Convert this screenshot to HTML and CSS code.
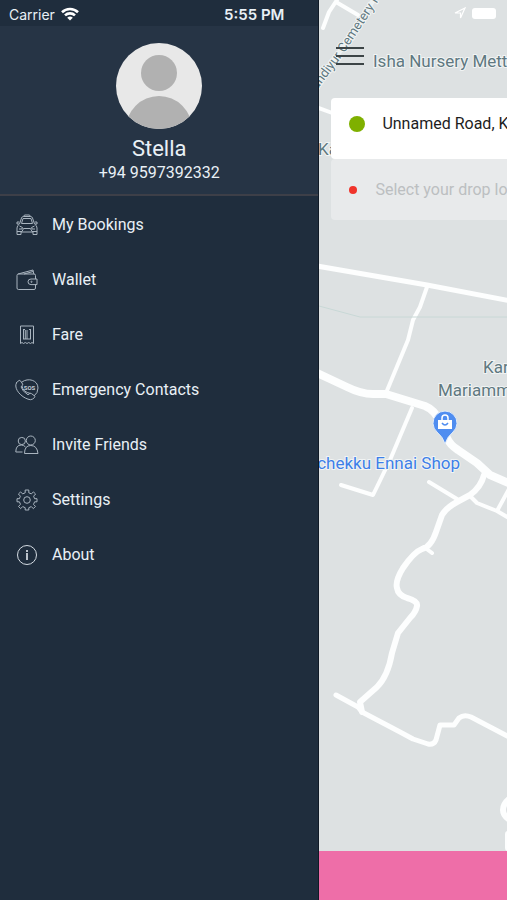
FILE: index.html
```
<!DOCTYPE html>
<html lang="en">

<head>
    <meta charset="UTF-8">
    <meta name="viewport" content="width=device-width, initial-scale=1.0">
    <title>Menu</title>
    <link rel="stylesheet" href="styles.css">
</head>

<body>
    <aside class="sidebar">
        <div class="status-bar">
            <div class="carrier">
                <span>Carrier</span>
                <svg width="18" height="14" viewBox="0 0 18 14" fill="none" stroke="#fff" stroke-width="2.6">
                    <path d="M1 5.2a11.5 11.5 0 0 1 16 0M4 8.4a7.2 7.2 0 0 1 10 0" />
                    <path d="M9 13.6L6.2 10.8a4 4 0 0 1 5.6 0z" fill="#fff" stroke="none" />
                </svg>
            </div>
            <span class="time">5:55 PM</span>
        </div>
        <div class="profile">
            <svg class="avatar" viewBox="0 0 86 86">
                <clipPath id="avatarClip"><circle cx="43" cy="43" r="43" /></clipPath>
                <g clip-path="url(#avatarClip)">
                    <rect width="86" height="86" fill="#e8e8e8" />
                    <circle cx="43" cy="30" r="18" fill="#b1b1b1" />
                    <circle cx="43" cy="86" r="33" fill="#b1b1b1" />
                </g>
            </svg>
            <div class="name">Stella</div>
            <div class="phone">+94 9597392332</div>
        </div>
        <nav class="menu">
            <a class="menu-item" href="#bookings">
                <svg class="menu-icon" viewBox="0 0 24 24">
                    <path d="M8.500 3.500L9.500 2h5l1 1.500M4.500 11L6.500 5q.5-1.500 2-1.500h7q1.500 0 2 1.500l2 6M6.500 10.500L8 5.500h8l1.500 5zM4.300 9H2v2h2M19.700 9H22v2h-2M4.500 11Q2 12.500 2 15v6.500h4V19h12v2.500h4V15q0-2.500-2.500-4M2 18.500h5l1.500-3h7l1.500 3h5M4.500 13l3 1.500-.5 1.500H4M19.500 13l-3 1.500.5 1.500h3" />
                </svg>
                <span>My Bookings</span>
            </a>
            <a class="menu-item" href="#wallet">
                <svg class="menu-icon" viewBox="0 0 24 24">
                    <path d="M20.500 11V7.500q0-1.500-1.500-1.500H3.500Q2 6 2 7.500V20q0 1.500 1.500 1.500H19q1.500 0 1.500-1.500v-3.500M3 6l15-4 .8 4M9 6l9-2.500M22 11h-6q-3 0-3 2.800t3 2.800h6z" />
                    <circle cx="16.500" cy="13.800" r=".6" />
                </svg>
                <span>Wallet</span>
            </a>
            <a class="menu-item" href="#fare">
                <svg class="menu-icon" viewBox="0 0 24 24">
                    <path d="M5.500 3h13v17.500l-1.500-1-1.500 1-1.800-1-1.700 1-1.700-1-1.800 1-1.500-1-1.500 1z" />
                    <path d="M8.500 6v10M10.300 7v9M12 7v9M15.500 6v10M8 6.500h2M14 6.500h2M8 16h8" />
                </svg>
                <span>Fare</span>
            </a>
            <a class="menu-item" href="#emergency">
                <svg class="menu-icon" viewBox="0 0 24 24">
                    <path d="M7 4C13-.5 23 2 23 10q0 5-4 8M1 5l3-2.500q1-.5 1.600.5l2 3q.5 1-.4 1.700L6 8.800q1 4.200 7 8l1.800-1.300q1-.6 1.800.2l2.700 2q1 .8.2 1.800-1.700 2-4 2.200C9 21 1 14 .8 8q0-2 .7-3M7 8q1 6 8.500 7.500" />
                    <text x="14.500" y="11.800" class="sos">SOS</text>
                </svg>
                <span>Emergency Contacts</span>
            </a>
            <a class="menu-item" href="#invite">
                <svg class="menu-icon" viewBox="0 0 24 24">
                    <circle cx="6.800" cy="8" r="3.600" />
                    <circle cx="15.800" cy="7.500" r="4.500" />
                    <path d="M9.500 20.500q0-8 6.300-8t7.200 8zM7.500 19H.8q0-7 5.500-7 2.500 0 4.200 2" />
                </svg>
                <span>Invite Friends</span>
            </a>
            <a class="menu-item" href="#settings">
                <svg class="menu-icon" viewBox="0 0 24 24">
                    <path d="M10.200 2h3.600v2.800l2.600 1.100 2-2L20.600 6l-2 2.200 1 2.500H22v3.100h-2.400l-1.100 2.600 2 2-2.200 2.200-2-2-2.500 1.100V22h-3.600v-2.300l-2.500-1.100-2 2-2.200-2.200 2-2-1.100-2.600H2v-3.100h2.400l1-2.500-2-2.200 2.200-2.100 2 2 2.600-1.100z" />
                    <circle cx="12" cy="12" r="3.300" />
                </svg>
                <span>Settings</span>
            </a>
            <a class="menu-item" href="#about">
                <svg class="menu-icon about-icon" viewBox="0 0 24 24">
                    <circle cx="12" cy="12" r="9.500" />
                    <path d="M12 10v7M12 7v2" stroke-width="1.700" />
                </svg>
                <span>About</span>
            </a>
        </nav>
    </aside>

    <main class="home">
        <div class="map-area">
            <svg class="map">
                <!-- small roads -->
                <g class="road" stroke-width="4">
                    <path d="M4 28L10 12 18 0M17 2L39 15M0 108L16 114" />
                    <path d="M108 287L101 307 94 320 89 340 67 393" />
                    <path d="M93 408L71 460 54 495 22 485" />
                    <path d="M110 482L138 499M151 496L158 503 178 511 190 518M190 489L178 511M105 547L113 553" />
                </g>
                <path d="M0 306L41 317H400" stroke="#c8d8d6" fill="none" />
                <!-- wider roads -->
                <g class="road" stroke-width="6">
                    <path d="M-2 266L108 285 192 301" stroke-width="5" />
                    <path d="M165 475Q162 487 151 495L138 502Q127 508 123 515L117 532Q112 547 103 549 95 552 84 568 76 581 78 588 79 595 88 598 99 601 98 606 97 612 91 618L79 633 73 653Q69 676 58 687L41 702 43 712" />
                    <path d="M17 695L39 707 43 712 81 732 94 739 109 744Q115 745 117 740L121 725H135L140 718Q145 714 152 717L192 738" stroke-width="5" />
                    <path d="M190 799Q184 804 184 810T191 820M189 834V848" />
                </g>
                <path class="road" stroke-width="8" d="M-4 372L28 387Q42 394 54 394H67L106 406Q116 410 121 422L128 438Q131 445 139 450L158 463 171 475 192 484" />
                <path d="M-10 93L17 57 61-10" fill="none" stroke="#edf1f1" stroke-width="5" />
                <path id="cemeteryRoad" d="M-2 90L22 58 68-12" fill="none" />

                <text class="street"><textPath href="#cemeteryRoad">andiyur Cemetery R</textPath></text>
                <text class="place" x="54" y="67">Isha Nursery Mett</text>
                <text class="place" x="-1" y="155">Ka</text>
                <text class="place" x="164" y="373">Kar</text>
                <text class="place" x="119" y="396">Mariamm</text>
                <text class="place shop" x="141" y="469" text-anchor="end">chekku Ennai Shop</text>

                <path d="M126 444Q124 437 118 432A12 12 0 1 1 134 432Q128 437 126 444z" fill="#4f8df0" stroke="#dfeaf8" />
                <path d="M119 420h14v9h-14z" fill="#fff" />
                <path d="M123 420v-2a3 3 0 0 1 6 0v2" fill="none" stroke="#fff" stroke-width="1.500" />
                <path d="M123 423q3 4 6 0" fill="none" stroke="#4f8df0" stroke-width="1.500" />
            </svg>

            <div class="overlay">
                <div class="map-status">
                    <svg width="12" height="12" viewBox="0 0 12 12" fill="none" stroke="#fff" stroke-width="1.200">
                        <path d="M1 6L11 1 6.500 11V6z" />
                    </svg>
                    <span class="battery"></span>
                </div>
                <button class="menu-button" aria-label="Menu">
                    <span></span>
                    <span></span>
                    <span></span>
                </button>
                <form class="locations">
                    <div class="location pickup">
                        <span class="dot"></span>
                        <input type="text" value="Unnamed Road, K" aria-label="Pickup location">
                    </div>
                    <div class="location drop">
                        <span class="dot"></span>
                        <input type="text" placeholder="Select your drop lo" aria-label="Drop location">
                    </div>
                </form>
            </div>
        </div>
        <button class="book-button" aria-label="Book"></button>
    </main>
</body>

</html>
```
FILE: styles.css
```
* {
    box-sizing: border-box;
}

body {
    margin: 0;
    min-height: 100vh;
    display: flex;
    font-family: Roboto, "Liberation Sans", sans-serif;
    background-color: #dde1e2;
}

.sidebar {
    width: 63%;
    flex-shrink: 0;
    background-color: #1f2d3d;
    border-right: 1px solid #101a26;
    color: #e9f0f6;
}

.status-bar {
    height: 26px;
    display: flex;
    justify-content: space-between;
    align-items: center;
    padding: 2px 34px 0 9px;
    font-family: Inter, "Liberation Sans", sans-serif;
    font-size: 14px;
}

.carrier {
    display: flex;
    align-items: center;
    gap: 6px;
}

.time {
    font-size: 15px;
    font-weight: 600;
}

.profile {
    display: flex;
    flex-direction: column;
    align-items: center;
    padding: 17px 0 11px;
    background-color: #263445;
    border-bottom: 2px solid #3d3f48;
}

.avatar {
    width: 86px;
    height: 86px;
}

.name {
    margin-top: 6px;
    font-size: 22px;
    line-height: 28px;
}

.phone {
    font-size: 16px;
    line-height: 20px;
}

.menu {
    display: flex;
    flex-direction: column;
    padding-top: 1px;
}

.menu-item {
    height: 55px;
    display: flex;
    align-items: center;
    gap: 13px;
    padding-left: 15px;
    font-size: 16px;
    color: #e9f0f6;
    text-decoration: none;
}

.menu-icon {
    width: 24px;
    height: 24px;
    fill: none;
    stroke: #a9b4bf;
    stroke-width: 1;
    stroke-linejoin: round;
}

.about-icon {
    stroke: #d5dce3;
}

.sos {
    font-size: 6px;
    font-weight: bold;
    text-anchor: middle;
    fill: #c5ced6;
    stroke: none;
}

.home {
    flex: 1;
    min-width: 0;
    display: flex;
    flex-direction: column;
}

.map-area {
    position: relative;
    flex: 1;
    overflow: hidden;
}

.map {
    position: absolute;
    top: 0;
    left: 0;
    width: 100%;
    height: 100%;
}

.road {
    fill: none;
    stroke: #fdfefe;
    stroke-linecap: round;
    stroke-linejoin: round;
}

.place,
.street {
    font-size: 17px;
    fill: #5f7880;
    stroke: #f1f4f4;
    stroke-width: 2px;
    paint-order: stroke;
}

.street {
    font-size: 13px;
}

.shop {
    fill: #3d7fe8;
}

.overlay {
    position: relative;
}

.map-status {
    height: 26px;
    display: flex;
    justify-content: flex-end;
    align-items: center;
    gap: 6px;
    padding-right: 11px;
}

.battery {
    width: 24px;
    height: 11px;
    background-color: white;
    border-radius: 3px;
}

.menu-button {
    display: flex;
    flex-direction: column;
    gap: 6px;
    width: 40px;
    margin: 14px 0 0 11px;
    padding: 7px 6px;
    background: none;
    border: none;
    cursor: pointer;
}

.menu-button span {
    width: 100%;
    height: 2px;
    background-color: #3c4446;
}

.locations {
    margin: 26px 0 0 12px;
}

.location {
    height: 61px;
    display: flex;
    align-items: center;
    padding-left: 18px;
    border-radius: 4px 0 0 4px;
}

.pickup {
    gap: 17px;
    padding-bottom: 10px;
    background-color: white;
}

.drop {
    gap: 18px;
    background-color: #e8eaeb;
}

.dot {
    flex-shrink: 0;
    width: 16px;
    height: 16px;
    border-radius: 50%;
    background-color: #7fb000;
}

.drop .dot {
    width: 8px;
    height: 8px;
    background-color: #f0342b;
}

.location input {
    flex: 1;
    min-width: 0;
    padding: 0;
    border: none;
    outline: none;
    background: transparent;
    font-family: inherit;
    font-size: 16px;
    color: #1d1d1d;
}

.location input::placeholder {
    color: #bcbfc1;
}

.book-button {
    height: 49px;
    border: none;
    background-color: #ee6ea8;
    cursor: pointer;
}
```
